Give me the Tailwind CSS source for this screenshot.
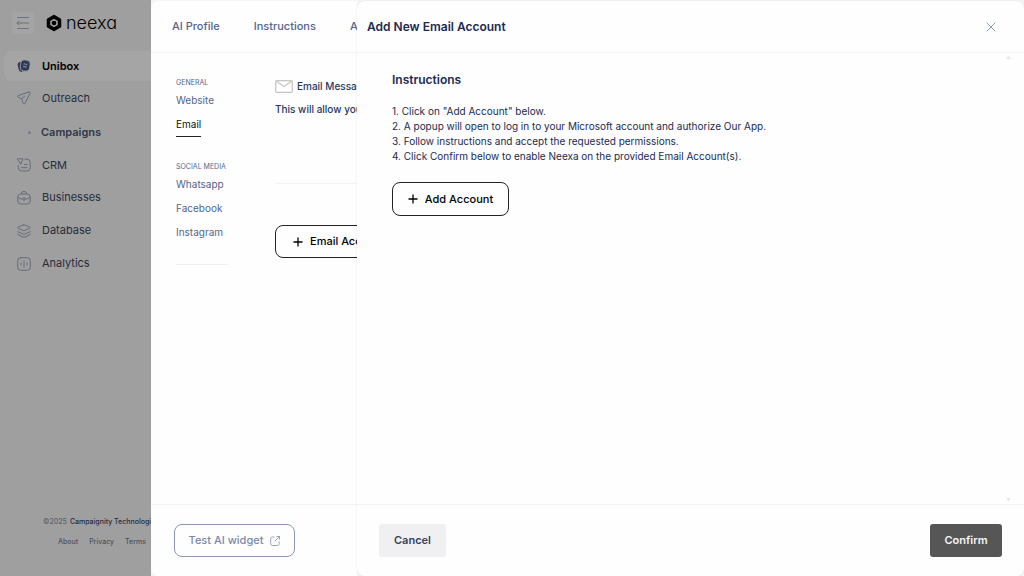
<!DOCTYPE html>
<html lang="en">
   <head>
      <meta charset="utf-8" />
      <meta name="viewport" content="width=device-width, initial-scale=1" />
      <title>Neexa - Add New Email Account</title>
      <script src="https://cdn.jsdelivr.net/npm/@tailwindcss/browser@4"></script>
   </head>
   <body class="flex h-screen overflow-hidden bg-[#f5f5f5] font-['Inter',sans-serif] text-[11px]">
      <!-- Sidebar, dimmed behind the drawers -->
      <aside class="flex w-[151px] shrink-0 flex-col overflow-hidden bg-[#9f9f9f] whitespace-nowrap text-[#262d3b]">
         <header class="flex h-[46px] shrink-0 items-center pl-3">
            <button aria-label="Collapse menu" class="flex size-[22px] items-center justify-center rounded bg-[#a4a4a4]">
               <svg class="size-[14px]" viewBox="0 0 14 14" fill="none" stroke="#6b7180" stroke-linecap="round">
                  <path d="M1.500 1.500h11M5 7h7.500M1.500 12.500h11M1 7h4M3 5L1 7l2 2" />
               </svg>
            </button>
            <a href="#" class="ml-3 flex items-center gap-1 text-[18px] leading-5 text-black">
               <svg class="h-[18px] w-4" viewBox="0 0 16 18">
                  <path d="M8 2L14 5.500v7L8 16l-6-3.500v-7z" stroke="#000" stroke-width="2.500" stroke-linejoin="round" />
                  <path d="M8 4.800l3.800 2.100v4.200L8 13.200l-3.800-2.100V6.900z" fill="#9f9f9f" />
                  <circle cx="8" cy="9" r="2.300" />
               </svg>
               <span class="font-light [font-feature-settings:'cv11']">neexa</span>
            </a>
         </header>
         <nav class="flex flex-col pt-[5px]">
            <a href="#" class="ml-1 flex h-[30px] items-center gap-[11px] rounded-l-lg bg-[#a5a5a5] pl-[13px] font-semibold text-black">
               <svg class="size-[14px]" viewBox="0 0 14 14">
                  <rect x="1" y="2.500" width="9" height="10" rx="3" transform="rotate(-14 5 7)" fill="#2c3a58" />
                  <rect x="3.500" y="1" width="9.500" height="11" rx="3.500" transform="rotate(8 8 6)" fill="#2c3a58" stroke="#a5a5a5" stroke-width=".8" />
                  <path d="M6.500 5.200c1.200-1 2.400 1 3.800 0M6.200 7.800c1.200-1 2.400 1 3.600 0" fill="none" stroke="#a5a5a5" />
               </svg>
               Unibox
            </a>
            <a href="#" class="flex h-[34px] items-center gap-[11px] pl-[17px]">
               <svg class="size-[14px]" viewBox="0 0 14 14" fill="none" stroke="#666c7c" stroke-linejoin="round">
                  <path d="M1.300 4.500c-.8.300-.8 1.200-.1 1.600l3.300 1.600 1.800 4.800c.3.700 1.300.7 1.600 0L13.300 1.900c.2-.6-.3-1.200-1-1zM4.500 7.700l3.300-2.600" />
               </svg>
               Outreach
            </a>
            <a href="#" class="flex h-[34px] items-center gap-[10px] pl-7 font-semibold text-[#30384b]">
               <span class="size-[3px] rounded-full bg-[#777d8d]"></span>
               Campaigns
            </a>
            <a href="#" class="flex h-8 items-center gap-[11px] pl-[17px]">
               <svg class="size-[14px]" viewBox="0 0 14 14" fill="none" stroke="#666c7c" stroke-linecap="round" stroke-linejoin="round">
                  <path d="M8 1.200h2a3.200 3.200 0 0 1 3.200 3.200v5.400a3.200 3.200 0 0 1-3.200 3.200H4.500a3.200 3.200 0 0 1-3.200-3.200V7.500M.8.800h5v1.300L4.200 4v2L2.500 5V4L.8 2.100zM7.500 6.500h2.500M4.500 9.700h5.500" />
               </svg>
               CRM
            </a>
            <a href="#" class="flex h-[33px] items-center gap-[11px] pl-[17px]">
               <svg class="size-[14px]" viewBox="0 0 14 14" fill="none" stroke="#666c7c">
                  <rect x=".8" y="3" width="12.400" height="10" rx="3" />
                  <path d="M4.500 3V2c0-.8.500-1.300 1.300-1.300h2.400c.8 0 1.300.5 1.300 1.300v1M1 6.500c1.500 1 3 1.500 4.700 1.600M13 6.500c-1.500 1-3 1.500-4.700 1.600" />
                  <circle cx="7" cy="8" r="1.300" />
               </svg>
               Businesses
            </a>
            <a href="#" class="flex h-[33px] items-center gap-[11px] pl-[17px]">
               <svg class="size-[14px]" viewBox="0 0 14 14" fill="none" stroke="#666c7c" stroke-linecap="round" stroke-linejoin="round">
                  <path d="M6.200 1L1.200 3.100c-.6.300-.6.800 0 1.100l5 2.200c.6.200 1 .2 1.600 0l5-2.200c.6-.3.600-.8 0-1.100L7.800 1c-.6-.3-1-.3-1.600 0zM.8 7c0 .5.300.8.700 1l4.700 2c.6.200 1 .2 1.600 0l4.700-2c.4-.2.700-.5.700-1M.8 10c0 .5.300.8.700 1l4.700 2c.6.200 1 .2 1.600 0l4.700-2c.4-.2.700-.5.700-1" />
               </svg>
               Database
            </a>
            <a href="#" class="flex h-[33px] items-center gap-[11px] pl-[17px]">
               <svg class="size-[14px]" viewBox="0 0 14 14" fill="none" stroke="#666c7c" stroke-linecap="round">
                  <rect x=".7" y=".7" width="12.600" height="12.600" rx="3" />
                  <path d="M7 4v6M4 6v2M10 6v2" />
               </svg>
               Analytics
            </a>
         </nav>
         <footer class="mt-auto flex flex-col pb-6 text-[7px] font-medium">
            <p class="flex gap-[3px] pl-[43px] leading-5 text-[#5b6170]">©2025 <a href="#" class="text-[#262d3b]">Campaignity Technologies</a></p>
            <div class="flex gap-[11px] pl-[58px] leading-5 text-[#4b5263]">
               <a href="#">About</a>
               <a href="#">Privacy</a>
               <a href="#">Terms</a>
            </div>
         </footer>
      </aside>

      <!-- Settings drawer, partly covered by the account drawer -->
      <section class="mt-px flex w-[206px] shrink-0 flex-col overflow-hidden rounded-l-lg bg-[#fefefe] whitespace-nowrap text-[#56648a]">
         <nav class="flex h-[52px] shrink-0 items-center gap-[34px] border-b border-[#f3f3f4] pl-[21px] font-medium">
            <a href="#">AI Profile</a>
            <a href="#">Instructions</a>
            <a href="#">Actions</a>
         </nav>
         <div class="flex flex-1 gap-[47px] pl-[25px]">
            <nav class="flex w-[52px] shrink-0 flex-col items-start pt-[25px] text-[10px]">
               <h3 class="text-[7px] leading-[10px]">GENERAL</h3>
               <a href="#" class="leading-6">Website</a>
               <a href="#" class="border-b border-[#222] leading-6 text-[#111]">Email</a>
               <h3 class="mt-[25px] text-[7px] leading-[10px]">SOCIAL MEDIA</h3>
               <a href="#" class="leading-6">Whatsapp</a>
               <a href="#" class="leading-6">Facebook</a>
               <a href="#" class="leading-6">Instagram</a>
               <hr class="mt-5 w-full border-[#f0f0f0]" />
            </nav>
            <div class="w-[260px] shrink-0 pt-6 text-[10px] font-medium text-[#283860]">
               <div class="flex h-[18px] items-center gap-1">
                  <svg class="h-[13px] w-[18px]" viewBox="0 0 18 13" fill="none" stroke="#c6c6c6" stroke-width="1.300">
                     <rect x=".7" y=".7" width="16.600" height="11.600" rx="1" />
                     <path d="M1 1l8 5.500L17 1" />
                  </svg>
                  Email Messages
               </div>
               <p class="mt-1 leading-5">This will allow your AI to reply emails</p>
               <hr class="mt-16 border-[#f3f3f3]" />
               <button class="mt-[41px] flex h-[33px] items-center gap-[7px] rounded-lg border border-[#222] px-[17px] text-[11px] text-black">
                  <svg class="size-[10px]" viewBox="0 0 10 10" stroke="currentColor" stroke-width="1.300"><path d="M5 .5v9M.5 5h9" /></svg>
                  Email Account
               </button>
            </div>
         </div>
         <footer class="flex h-[72px] shrink-0 items-center border-t border-[#f3f3f4] pl-[23px]">
            <button class="flex h-[33px] w-[121px] items-center justify-center gap-[7px] rounded-lg border border-[#8a98b5] font-medium text-[#7c8aa9]">
               Test AI widget
               <svg class="size-[10px]" viewBox="0 0 10 10" fill="none" stroke="currentColor" stroke-width=".8">
                  <path d="M4.500 1H2.500C1.500 1 .7 1.800.7 2.800v4.900c0 1 .8 1.800 1.800 1.800h4.900c1 0 1.800-.8 1.800-1.800V5.500M6.500.5h3v3M9.500.5L4.800 5.200" />
               </svg>
            </button>
         </footer>
      </section>

      <!-- Add account drawer -->
      <main class="mt-px flex min-w-0 flex-1 flex-col rounded-lg bg-[#fefefe] text-[#1b2a4e] shadow-[0_0_3px_#00000014]">
         <header class="flex h-[52px] shrink-0 items-center justify-between border-b border-[#f3f3f4] pr-7 pl-[10px]">
            <h1 class="text-xs font-semibold">Add New Email Account</h1>
            <button aria-label="Close">
               <svg class="size-[10px]" viewBox="0 0 10 10" stroke="#8b98bb"><path d="M.7.7l8.600 8.600M9.300.7L.7 9.300" /></svg>
            </button>
         </header>
         <div class="flex min-h-0 flex-1 justify-between pr-[13px] pl-[35px]">
            <div class="pt-[17px] text-[10px]">
               <h2 class="text-xs leading-5 font-semibold">Instructions</h2>
               <div class="mt-[14px] leading-[15px]">
                  <p>1. Click on "Add Account" below.</p>
                  <p>2. A popup will open to log in to your Microsoft account and authorize Our App.</p>
                  <p>3. Follow instructions and accept the requested permissions.</p>
                  <p>4. Click Confirm below to enable Neexa on the provided Email Account(s).</p>
               </div>
               <button class="mt-[18px] flex h-[34px] w-[117px] items-center justify-center gap-[7px] rounded-lg border border-[#222] text-[11px] font-medium text-black">
                  <svg class="size-[10px]" viewBox="0 0 10 10" stroke="currentColor" stroke-width="1.300"><path d="M5 .5v9M.5 5h9" /></svg>
                  Add Account
               </button>
            </div>
            <div class="flex flex-col justify-between py-[3px]">
               <svg class="h-[3px] w-[5px]" viewBox="0 0 5 3" fill="#e4e4e6"><path d="M2.500 0L5 3H0z" /></svg>
               <svg class="h-[3px] w-[5px]" viewBox="0 0 5 3" fill="#e4e4e6"><path d="M2.500 3L5 0H0z" /></svg>
            </div>
         </div>
         <footer class="flex h-[72px] shrink-0 items-center justify-between border-t border-[#f3f3f4] px-[22px] text-[11px] font-semibold">
            <button class="h-[33px] w-[67px] rounded-[3px] bg-[#f0f0f3] text-[#35425f]">Cancel</button>
            <button class="h-[33px] w-[72px] rounded-[3px] bg-[#565656] text-[#f5f5f5]">Confirm</button>
         </footer>
      </main>
   </body>
</html>
